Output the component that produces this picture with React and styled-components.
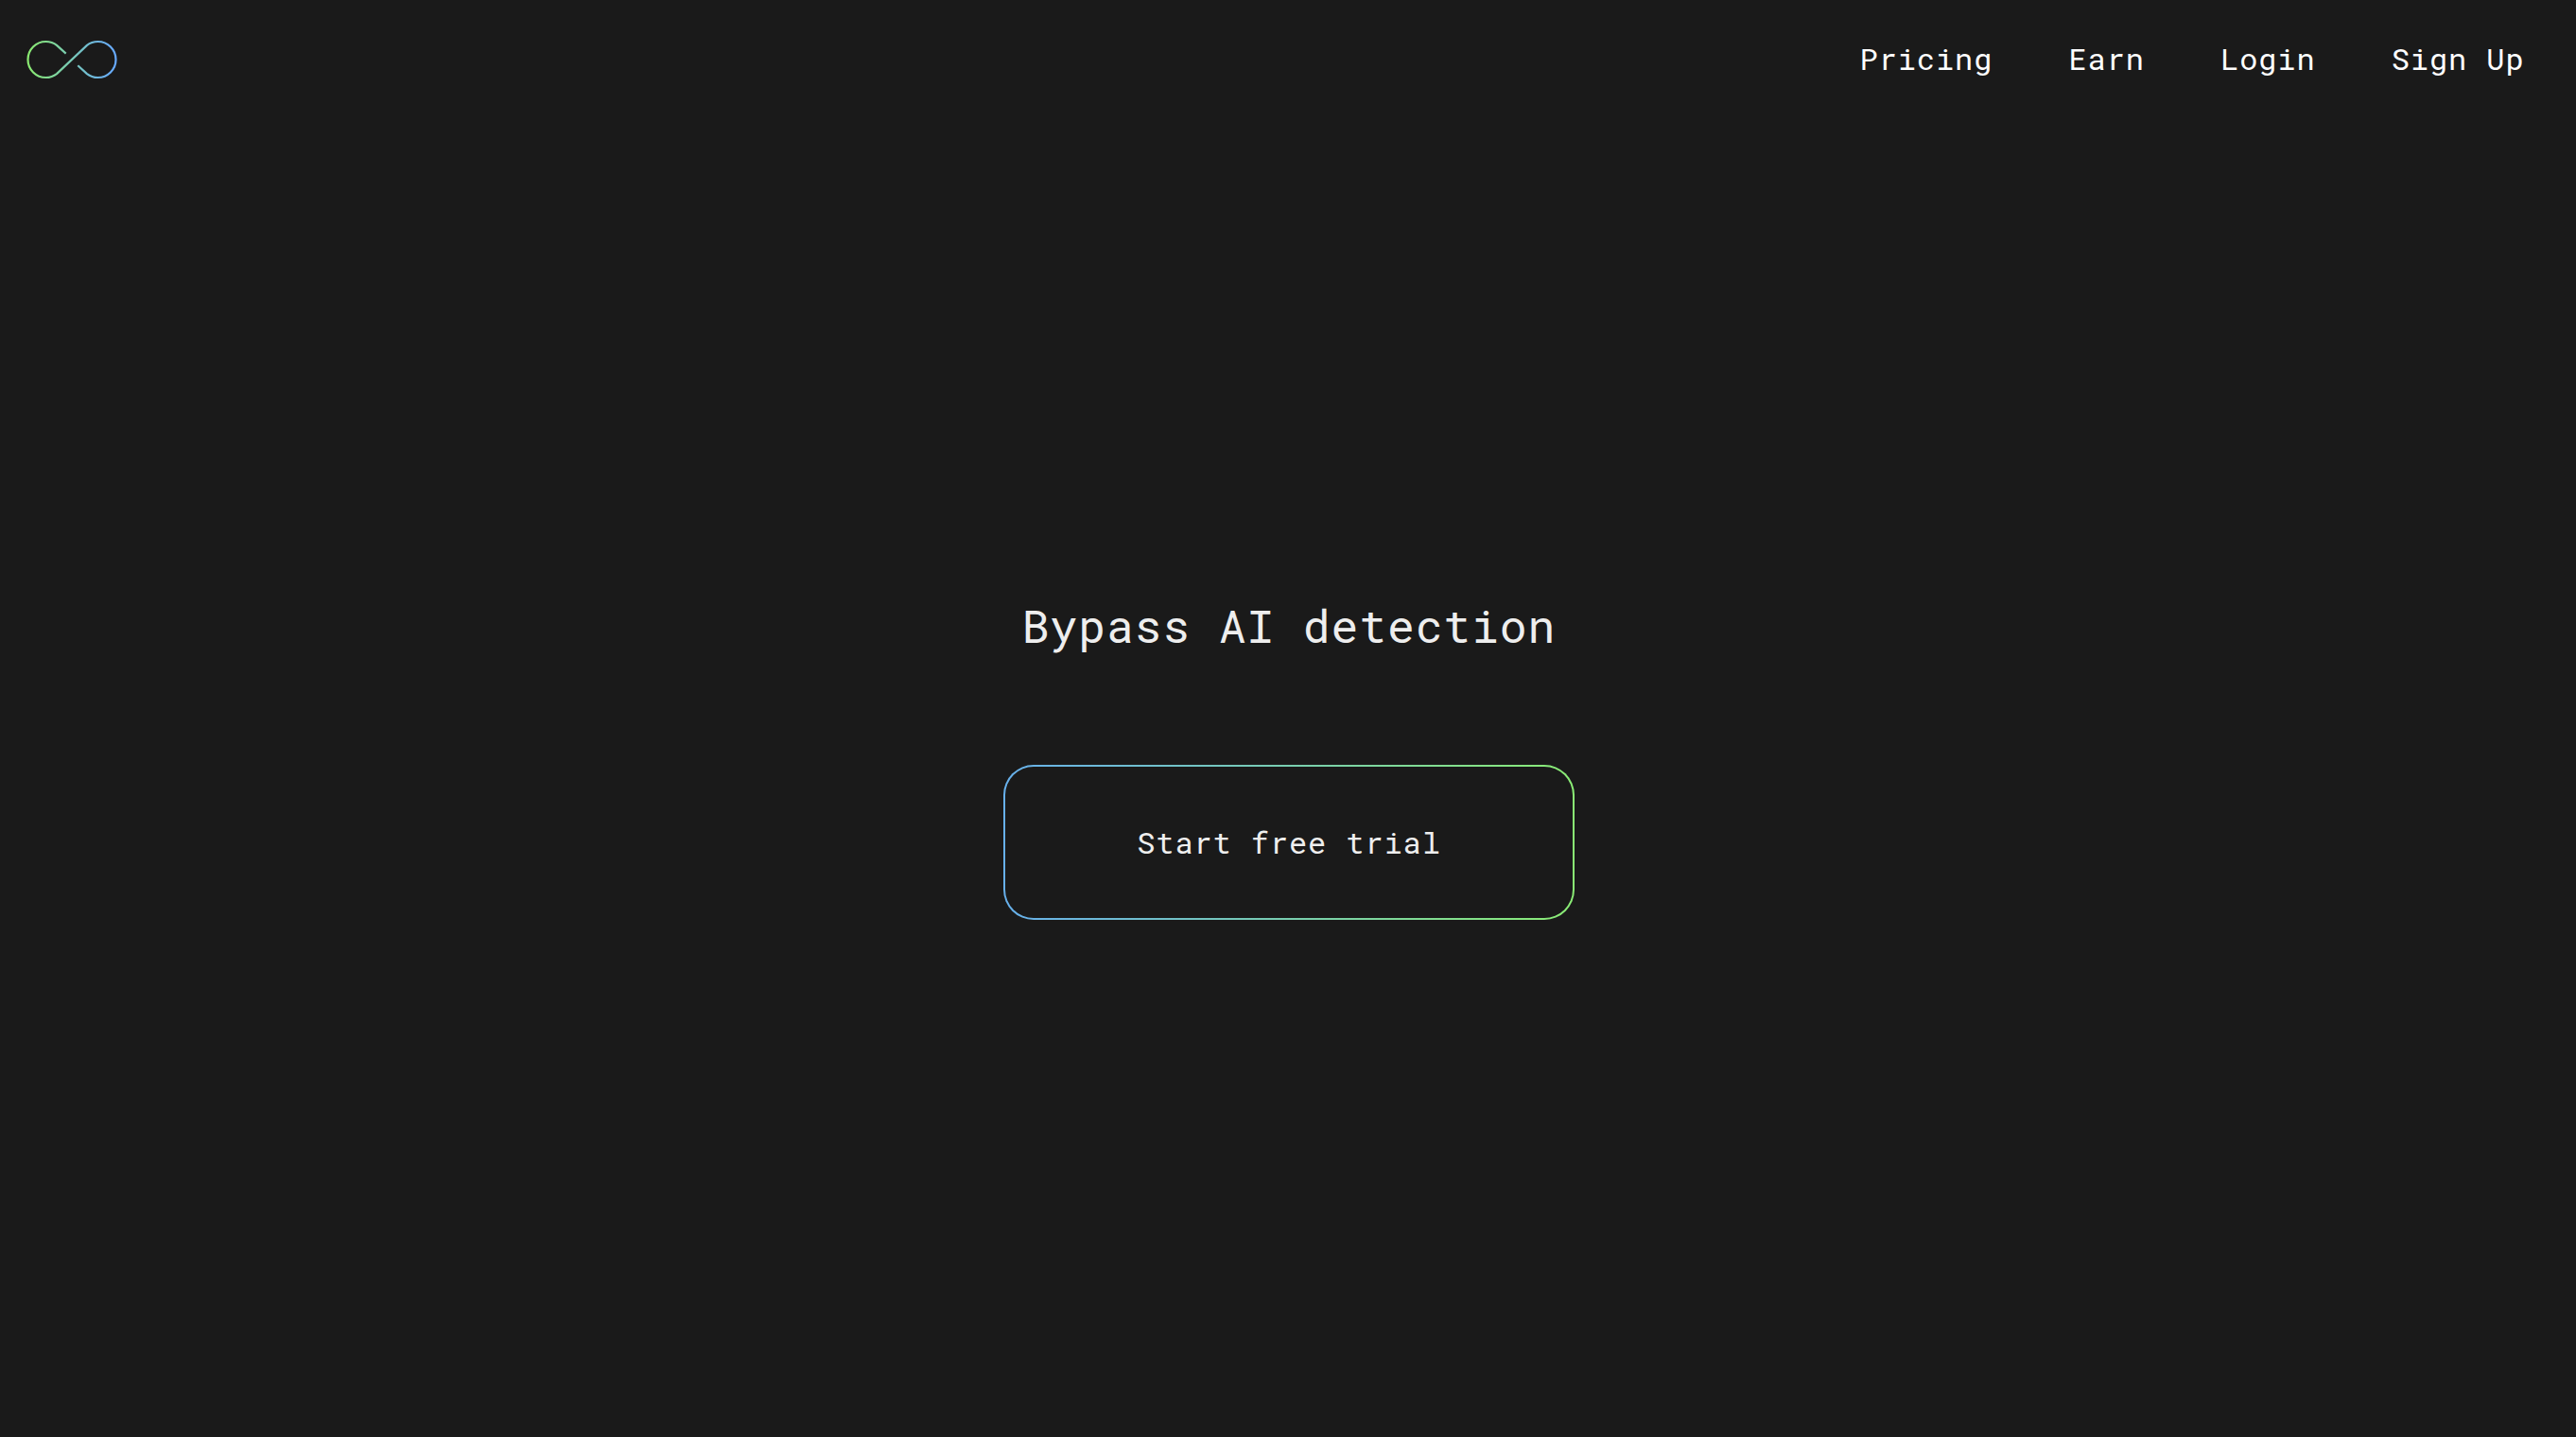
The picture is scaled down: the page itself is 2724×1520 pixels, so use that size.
import React from 'react'
import styled, { createGlobalStyle } from 'styled-components'

const links = ['Pricing', 'Earn', 'Login', 'Sign Up']

const App = () => (
  <>
    <GlobalStyle />
    <Page>
      <Header>
        <Logo />
        <Nav>
          {links.map(link => (
            <NavLink key={link} href="#">{link}</NavLink>
          ))}
        </Nav>
      </Header>
      <Hero>
        <Title>Bypass AI detection</Title>
        <TrialButton>Start free trial</TrialButton>
      </Hero>
    </Page>
  </>
)

const Logo = () => (
  <LogoSvg viewBox="0 0 96 42" fill="none">
    <defs>
      <linearGradient id="logoStroke" gradientUnits="userSpaceOnUse" x1="1" y1="0" x2="95" y2="0">
        <stop offset="0" stopColor="#8aea70" />
        <stop offset="1" stopColor="#66a8ff" />
      </linearGradient>
    </defs>
    <path
      stroke="url(#logoStroke)"
      strokeWidth="2.2"
      d="M41.7 14.6 L32 5.9 C28.5 3.1 24.5 2 20.5 2 A19 19 0 0 0 20.5 40 C24.5 40 28.5 38.9 32 36.1 L64 5.9 C67.5 3.1 71.5 2 75.5 2 A19 19 0 0 1 75.5 40 C71.5 40 67.5 38.9 64 36.1 L54.3 27.3"
    />
  </LogoSvg>
)

const GlobalStyle = createGlobalStyle`
  * {
    box-sizing: border-box;
  }

  body {
    margin: 0;
    background: #1a1a1a;
    color: #eee;
    font-family: 'Roboto Mono', 'DejaVu Sans Mono', monospace;
    font-size: 32px;
    letter-spacing: 0.9px;
  }
`

const Page = styled.div`
  display: flex;
  flex-direction: column;
  height: 1520px;
`

const Header = styled.header`
  display: flex;
  align-items: center;
  justify-content: space-between;
  height: 126px;
  padding: 0 54.5px 0 28px;
`

const LogoSvg = styled.svg`
  width: 96px;
  height: 42px;
`

const Nav = styled.nav`
  display: flex;
  gap: 80.2px;
  padding-bottom: 3px;
`

const NavLink = styled.a`
  color: #fff;
  line-height: 43px;
  text-decoration: none;
`

const Hero = styled.main`
  display: flex;
  flex-direction: column;
  align-items: center;
  padding: 504px 0 0 2px;
`

const Title = styled.h1`
  margin: 0 0 116px;
  font-size: 48px;
  font-weight: 400;
  line-height: 63px;
`

const TrialButton = styled.button`
  width: 604px;
  height: 164px;
  padding: 0 0 1px;
  border: 2px solid transparent;
  border-radius: 32px;
  background:
    linear-gradient(#1a1a1a, #1a1a1a) padding-box,
    linear-gradient(90deg, #67b0ec, #8aec74) border-box;
  color: inherit;
  font: inherit;
  letter-spacing: inherit;
`

export default App
